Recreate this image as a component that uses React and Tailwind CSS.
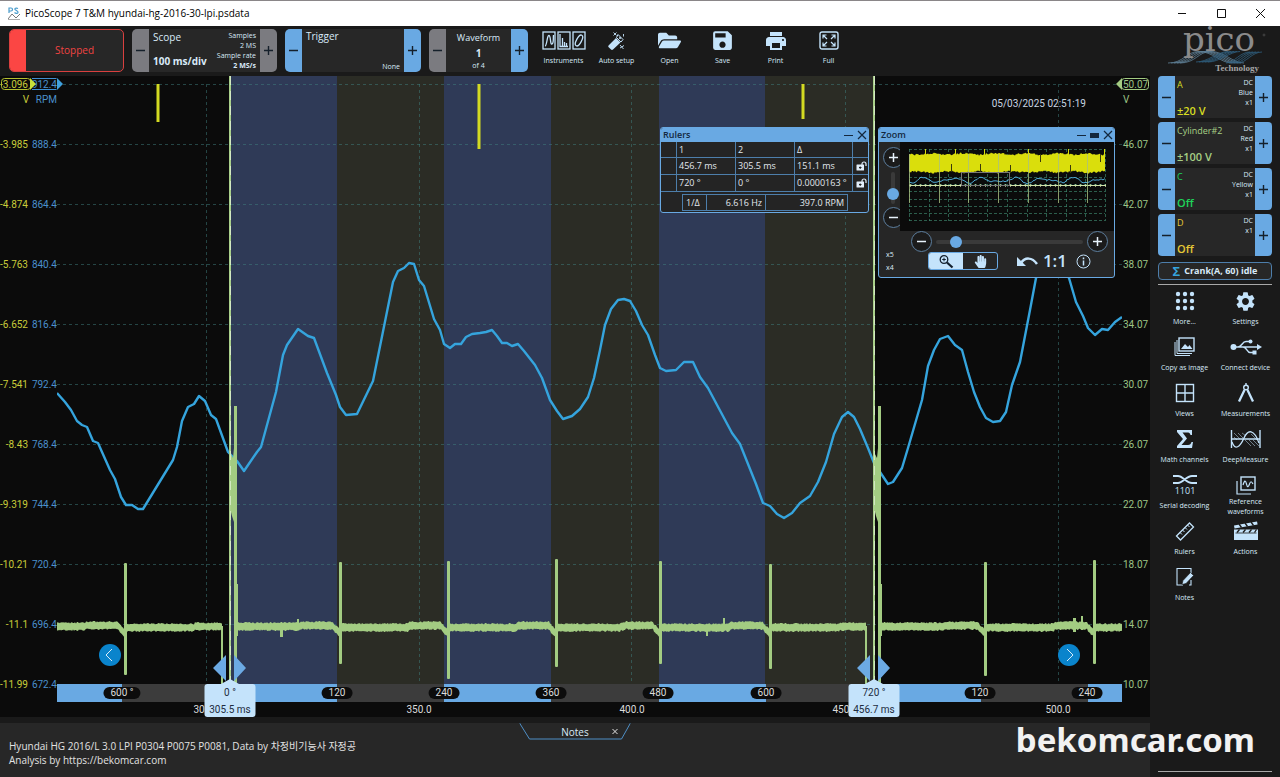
import React from "react";
import { FaFolderOpen, FaHandPaper } from "react-icons/fa";
import { MdSave, MdPrint, MdSettings } from "react-icons/md";

const UI = "font-['Open_Sans','Noto_Sans_CJK_KR',sans-serif]";
const ICE = "#c4e3fb";

/* Fixed-seed noise so that the traces look the same on every render. */
const noise = (n) => {
  const v = Math.sin(n * 12.9898 + 4.1) * 43758.5453;
  return v - Math.floor(v);
};

const X0 = 57;
const SPAN = 1065;
const pct = (x) => `${((x - X0) / SPAN) * 100}%`;

const RPM_CURVE =
  "57,393 65,402 71,410 77,421 82,425 87,427 93,441 98,443 110,470 115,479 121,497 126,505 132,505 138,509 143,509 173,460 177,447 182,421 188,407 194,404 199,396 205,401 211,415 216,419 228,452 237,461 244,471 257,452 261,447 276,392 283,355 287,345 298,329 308,336 314,338 327,373 336,395 340,407 346,415 357,414 373,381 393,282 398,271 404,268 409,263 414,264 419,280 424,286 434,319 440,330 444,344 450,348 455,344 461,344 466,337 472,334 480,333 486,332 492,330 497,336 502,343 507,343 512,346 518,344 524,351 535,365 542,378 550,400 557,411 563,419 572,416 580,409 588,397 594,378 600,350 605,325 611,309 618,300 624,299 630,301 636,311 642,325 648,335 655,355 660,368 666,371 676,370 684,362 693,362 700,377 708,388 716,403 724,418 732,433 740,444 748,464 756,484 763,503 770,506 777,514 784,518 792,513 800,503 810,496 818,482 826,462 834,434 842,417 848,412 854,417 860,429 868,448 874,463 880,472 888,484 893,482 902,468 908,448 915,424 922,400 928,366 934,350 940,339 948,336 955,345 962,350 968,372 974,392 980,407 986,418 993,422 1000,421 1006,412 1012,385 1020,362 1030,310 1036,278 1050,262 1060,266 1069,278 1076,302 1083,316 1088,328 1095,335 1102,329 1108,330 1115,322 1122,317";

const SPIKES = [
  [125, 563, 675],
  [340, 562, 664],
  [448, 561, 679],
  [556, 559, 667],
  [660, 561, 664],
  [770, 564, 669],
  [985, 562, 676],
  [1094, 560, 664],
];

function voltageBand(from, to) {
  const top = [];
  const bottom = [];
  for (let x = from; x <= to; x += 1) {
    let c = 626.5;
    SPIKES.forEach(([s]) => {
      const d = s - x;
      if (d >= 0 && d < 7) c += 7 - d;
      if (d < 0 && d > -70) c += 1;
      if (d >= 7 && d < 40) c -= 1;
    });
    top.push(`${x},${(c - 3 - noise(x) * 1.6).toFixed(1)}`);
    bottom.unshift(`${x},${(c + 3 + noise(x + 500) * 1.6).toFixed(1)}`);
  }
  return top.concat(bottom).join(" ");
}

const BANDS = [
  [230, 337, "#2f3a57"],
  [337, 444, "#2b2c25"],
  [444, 551, "#2f3a57"],
  [551, 659, "#2b2c25"],
  [659, 765, "#2f3a57"],
  [765, 874, "#2b2c25"],
];

function Plot() {
  return (
    <svg viewBox="57 76 1065 608" preserveAspectRatio="none" className="absolute inset-0 h-full w-full" role="img" aria-label="Crank speed and cylinder voltage">
      {BANDS.map(([a, b, c]) => (
        <rect key={a} x={a} y="76" width={b - a} height="608" fill={c} />
      ))}
      <g stroke="#3f7f80" strokeOpacity="0.5" strokeDasharray="3 3">
        {[0, 1, 2, 3, 4, 5, 6, 7, 8, 9].map((i) => (
          <line key={i} x1="57" x2="1122" y1={84.5 + i * 60} y2={84.5 + i * 60} />
        ))}
        {[206.5, 419.5, 631.5, 845.5, 1058.5].map((x) => (
          <line key={x} x1={x} x2={x} y1="84" y2="684" />
        ))}
      </g>
      <g fill="#d3da22">
        <rect x="156.5" y="84" width="3" height="38" />
        <rect x="477.5" y="84" width="3" height="65" />
        <rect x="801.5" y="84" width="3" height="35" />
      </g>
      <polyline points={RPM_CURVE} fill="none" stroke="#35a4dd" strokeWidth="2.4" strokeLinejoin="round" />
      <g fill="#a3cc82">
        <polygon points={voltageBand(57, 222)} />
        <polygon points={voltageBand(236, 866)} />
        <polygon points={voltageBand(881, 1122)} />
        {SPIKES.map(([x, a, b]) => (
          <rect key={x} x={x - 1} y={a} width="3" height={b - a} rx="1" />
        ))}
        <rect x="280" y="626" width="3" height="11" />
        <rect x="297" y="619" width="2" height="7" />
        <rect x="706" y="626" width="2" height="10" />
        <rect x="723" y="618" width="2" height="8" />
        <rect x="1073" y="618" width="3" height="14" />
        <rect x="1081" y="616" width="2" height="14" />
        {[0, 644].map((o) => (
          <g key={o}>
            <rect x={221 + o} y="626" width="2" height="58" />
            <rect x={234 + o} y="406" width="3" height="278" />
            <rect x={236 + o} y="584" width="2" height="52" />
            <path d={`M${230 + o} 452l3 6l2 -20l1 80l-2 4l-2 -6l-2 -8z`} />
          </g>
        ))}
      </g>
      {[230, 874].map((x) => (
        <g key={x}>
          <line x1={x} x2={x} y1="76" y2="684" stroke="#a9d08a" strokeWidth="2" />
          <line x1={x + 0.5} x2={x + 0.5} y1="76" y2="684" stroke="#eef8e8" strokeOpacity="0.6" strokeDasharray="9 6" />
          <path d={`M${x - 4} 655v26l-13 -13zM${x + 4} 655v26l12 -13z`} fill="#6caae4" />
          <path d={`M${x - 9} 684l9 -5l9 5z`} fill={ICE} />
        </g>
      ))}
    </svg>
  );
}

const LEFT_V = ["-3.096", "-3.985", "-4.874", "-5.763", "-6.652", "-7.541", "-8.43", "-9.319", "-10.21", "-11.1", "-11.99"];
const LEFT_RPM = ["912.4", "888.4", "864.4", "840.4", "816.4", "792.4", "768.4", "744.4", "720.4", "696.4", "672.4"];
const RIGHT_V = ["50.07", "46.07", "42.07", "38.07", "34.07", "30.07", "26.07", "22.07", "18.07", "14.07", "10.07"];

function LeftAxis() {
  return (
    <div className="z-10 flex w-[57px] shrink-0 flex-col justify-between pt-px pb-6 text-[10px] leading-4">
      {LEFT_V.map((v, i) => (
        <div key={v} className="relative flex h-4 items-center justify-end gap-[3px]">
          <span className="w-7 shrink-0 text-right text-[#c9cc3a]">
            <span className="float-right">{v}</span>
          </span>
          <span className="w-[26px] shrink-0 text-right text-[#4a90cc]">{LEFT_RPM[i]}</span>
          {i === 0 && (
            <>
              <svg className="absolute -top-px left-0" width="64" height="16" fill="none" aria-hidden="true">
                <rect x="1.5" y="2.5" width="29" height="11" rx="3" stroke="#b5c030" />
                <path d="M30 2l6 6l-6 6z" fill="#c9e03a" />
                <path d="M32 2.5h24.5M32 13.5h24.5" stroke="#3f8fd0" />
                <path d="M57 2l6 6l-6 6z" fill="#3fa0dd" />
              </svg>
              <span className="absolute top-[15px] right-7 text-[#c9cc3a]">V</span>
              <span className="absolute top-[15px] right-0 text-[#4a90cc]">RPM</span>
            </>
          )}
        </div>
      ))}
    </div>
  );
}

function RightAxis() {
  return (
    <div className="z-10 flex w-7 shrink-0 flex-col justify-between pt-px pb-6 text-[10px] leading-4 text-[#9cc486]">
      {RIGHT_V.map((v, i) => (
        <div key={v} className="relative h-4 pl-px">
          {v}
          {i === 0 && (
            <>
              <svg className="absolute -top-px -left-2" width="36" height="16" fill="none" aria-hidden="true">
                <rect x="7.5" y="2.5" width="27" height="11" rx="3" stroke="#a3cc82" />
                <path d="M8 2l-6 6l6 6z" fill="#a3cc82" />
              </svg>
              <span className="absolute top-[15px] left-px">V</span>
            </>
          )}
        </div>
      ))}
    </div>
  );
}

const SEGMENTS = [65, 108, 107, 107, 107, 108, 107, 108, 107, 107, 34];
const PILLS = [[122, "600 °"], [337, "120"], [444, "240"], [551, "360"], [658, "480"], [766, "600"], [980, "120"], [1087, "240"]];
const TIMES = [[206, "300.0"], [419, "350.0"], [632, "400.0"], [845, "450.0"], [1058, "500.0"]];
const FLAGS = [[230, "0 °", "305.5 ms"], [874, "720 °", "456.7 ms"]];

function DegreeBar() {
  return (
    <div className="relative shrink-0 text-[10px] text-[#dcdcdc]">
      <div className="flex h-[18px]">
        {SEGMENTS.map((w, i) => (
          <div key={i} className={i % 2 ? "bg-[#3c3c3c]" : "bg-[#69a9e3]"} style={{ flexGrow: w, flexBasis: 0 }} />
        ))}
      </div>
      <div className="h-[15px]" />
      {PILLS.map(([x, t]) => (
        <span key={x} style={{ left: pct(x) }} className="absolute top-[3px] -translate-x-1/2 rounded-full bg-[#0c0c0c] px-[7px] leading-3 whitespace-nowrap">
          {t}
        </span>
      ))}
      {TIMES.map(([x, t]) => (
        <span key={x} style={{ left: pct(x) }} className="absolute top-5 -translate-x-1/2 leading-3">
          {t}
        </span>
      ))}
      {FLAGS.map(([x, a, b]) => (
        <div key={x} style={{ left: pct(x) }} className="absolute top-0 flex h-[33px] w-[51px] -translate-x-1/2 flex-col items-center justify-between rounded-[3px] bg-[#c4e3fb] pt-[3px] pb-px leading-3 whitespace-nowrap text-[#1d2c40]">
          <span>{a}</span>
          <span>{b}</span>
        </div>
      ))}
    </div>
  );
}

function NavButton({ label, side, d }) {
  return (
    <button aria-label={label} className={`absolute bottom-[18px] flex size-[22px] items-center justify-center rounded-full bg-[#0a84cc] ${side}`}>
      <svg width="22" height="22" fill="none" stroke="#d8ecfa" strokeWidth="1">
        <path d={d} />
      </svg>
    </button>
  );
}

function WindowBar({ title, box }) {
  return (
    <div className="flex h-[14px] items-center justify-between bg-[#69a9e3] pr-px pl-[2px] text-[9px] leading-3 font-semibold text-[#13283e]">
      <h2>{title}</h2>
      <div className="flex items-center gap-1">
        <button aria-label={`Minimise ${title}`}>
          <svg width="9" height="10" stroke="#13283e"><path d="M0 5.5h9" /></svg>
        </button>
        {box && (
          <button aria-label={`Dock ${title}`}>
            <svg width="9" height="10" fill="#13283e"><rect x="0" y="3" width="9" height="5" /></svg>
          </button>
        )}
        <button aria-label={`Close ${title}`}>
          <svg width="10" height="10" stroke="#13283e" strokeWidth="1.2"><path d="M1 1l8 8M9 1l-8 8" /></svg>
        </button>
      </div>
    </div>
  );
}

const LockIcon = () => (
  <svg width="11" height="10" viewBox="0 0 11 10" fill="none">
    <rect x="0.5" y="3.5" width="7.5" height="6" rx="0.5" fill="#e2eefa" />
    <path d="M6 4V3a2 2 0 0 1 4 0v2" stroke="#e2eefa" strokeWidth="1.2" />
    <path d="M3 6.500h2.500M4.200 5.500v2.500" stroke="#222" />
  </svg>
);

function Rulers() {
  const cell = "border-r border-b border-[#4d7eab] px-[2px] font-normal text-left whitespace-nowrap";
  return (
    <section className={`absolute top-[51px] right-[281px] w-[209px] overflow-hidden rounded-[3px] border border-[#69a9e3] bg-[#242424] text-[9px] leading-3 text-[#e2e8ee] ${UI}`}>
      <WindowBar title="Rulers" />
      <table className="w-full table-fixed border-separate border-spacing-0">
        <colgroup>
          <col className="w-4" />
          <col className="w-[59px]" />
          <col className="w-[59px]" />
          <col />
          <col className="w-[15px]" />
        </colgroup>
        <thead>
          <tr className="h-4">
            <th className={cell} />
            <th className={cell}>1</th>
            <th className={cell}>2</th>
            <th className={cell}>Δ</th>
            <th className="border-b border-[#4d7eab]" />
          </tr>
        </thead>
        <tbody>
          {[["456.7 ms", "305.5 ms", "151.1 ms"], ["720 °", "0 °", "0.0000163 °"]].map((r) => (
            <tr key={r[0]} className="h-[17px]">
              <td className={cell} />
              {r.map((v) => (
                <td key={v} className={cell}>{v}</td>
              ))}
              <td className="border-b border-[#4d7eab] p-0 pl-[3px]">
                <button aria-label="Lock ruler" className="block"><LockIcon /></button>
              </td>
            </tr>
          ))}
        </tbody>
      </table>
      <dl className="mt-[2px] mr-5 mb-px ml-[21px] flex h-[17px] items-center border border-[#4d7eab]">
        <dt className="w-6 self-stretch border-r border-[#4d7eab] pl-[3px] leading-4">1/Δ</dt>
        <dd className="w-[59px] self-stretch border-r border-[#4d7eab] pr-[3px] text-right leading-4">6.616 Hz</dd>
        <dd className="flex-1 pr-[3px] text-right leading-4">397.0 RPM</dd>
      </dl>
    </section>
  );
}

function miniBand() {
  const top = [];
  const bottom = [];
  for (let x = 0; x <= 196; x += 1) {
    top.push(`${x},${(6 - noise(x) * 2 + Math.sin(x / 5) * 0.7).toFixed(1)}`);
    bottom.unshift(`${x},${(22 + noise(x + 70) * 2 - Math.sin(x / 5) * 0.7).toFixed(1)}`);
  }
  return top.concat(bottom).join(" ");
}

const MINI_RPM = Array.from({ length: 99 }, (_, i) => `${i * 2},${(30.5 + noise(i) * 1.5 + Math.sin(i / 1.5) * 1.2 - Math.cos(((i * 2) / 29.8) * 6.283) * -2).toFixed(1)}`).join(" ");

function MiniMap() {
  return (
    <svg viewBox="-9 -7 214 89" preserveAspectRatio="none" className="h-[89px] min-w-0 flex-1 bg-[#0b0b0b]" role="img" aria-label="Capture overview">
      <g stroke="#3f8a70" strokeOpacity="0.65" strokeDasharray="3 2" fill="none">
        {[0, 7, 14, 21, 28, 35, 42, 50, 57, 64, 71].map((y) => (
          <path key={y} d={`M0 ${y + 0.5}h196`} />
        ))}
        {[0, 20, 39, 59, 78, 98, 118, 137, 157, 176, 196].map((x) => (
          <path key={x} d={`M${x + 0.5} 0v72`} />
        ))}
      </g>
      <polygon points={miniBand()} fill="#dade0c" />
      <g fill="#dade0c">
        {[16, 46, 75, 119, 159, 195].map((x) => (
          <rect key={x} x={x} y="0" width="1" height="6" />
        ))}
      </g>
      <g fill="#39390a">
        {[[42, 15], [71, 15], [101, 16], [131, 5], [161, 16], [191, 5]].map(([x, y]) => (
          <rect key={x} x={x} y={y} width="1" height="8" />
        ))}
      </g>
      <polyline points={MINI_RPM} fill="none" stroke="#4fa8d4" />
      <path d="M0 36.5h197" stroke="#cfe0a8" strokeWidth="1" />
      <path d="M1 36.5h196" stroke="#cfe0a8" strokeWidth="3" strokeDasharray="1 4" strokeOpacity="0.7" />
      <g fill="#a9bf7f">
        {[0, 30, 59, 89, 119, 149, 178].map((x) => (
          <rect key={x} x={x} y="5" width="1" height="49" fillOpacity={0.8} />
        ))}
      </g>
      <rect x="52.5" y="23.5" width="48" height="13" fill="none" stroke="#777" />
    </svg>
  );
}

function RoundButton({ label, plus }) {
  return (
    <button aria-label={label} className="flex size-[21px] shrink-0 items-center justify-center rounded-full border border-[#5d7f9f] bg-[#1b1b1b]">
      <svg width="9" height="9" stroke="#e8f3fc" strokeWidth="1.5">
        <path d={plus ? "M0 4.5h9M4.5 0v9" : "M0 4.5h9"} />
      </svg>
    </button>
  );
}

const RANGE =
  "appearance-none bg-transparent [&::-webkit-slider-runnable-track]:rounded-full [&::-webkit-slider-runnable-track]:bg-[#3a3a3a] [&::-webkit-slider-thumb]:size-3 [&::-webkit-slider-thumb]:appearance-none [&::-webkit-slider-thumb]:rounded-full [&::-webkit-slider-thumb]:bg-[#69a9e3]";

function ZoomPanel() {
  return (
    <section className={`absolute top-[51px] right-[35px] w-[237px] overflow-hidden rounded-[3px] border border-[#69a9e3] bg-[#262626] text-[#dcebf8] ${UI}`}>
      <WindowBar title="Zoom" box />
      <div className="flex">
        <div className="flex w-[21px] shrink-0 flex-col items-start justify-between pt-[5px] pb-[3px] pl-1">
          <RoundButton label="Zoom in vertically" plus />
          <input
            type="range"
            aria-label="Vertical zoom"
            defaultValue="20"
            className={`ml-1 h-8 w-3 [direction:rtl] [writing-mode:vertical-lr] [&::-webkit-slider-runnable-track]:w-1 [&::-webkit-slider-thumb]:-ml-1 ${RANGE}`}
          />
          <RoundButton label="Zoom out vertically" />
        </div>
        <MiniMap />
      </div>
      <div className="flex items-center gap-1 pr-[6px] pl-8">
        <RoundButton label="Zoom out horizontally" />
        <input
          type="range"
          aria-label="Horizontal zoom"
          defaultValue="10"
          className={`h-3 min-w-0 flex-1 [&::-webkit-slider-runnable-track]:h-1 [&::-webkit-slider-thumb]:-mt-1 ${RANGE}`}
        />
        <RoundButton label="Zoom in horizontally" plus />
      </div>
      <div className="mb-[7px] flex h-[18px] items-center pr-[23px] pl-[7px]">
        <div className="w-[42px] text-[7px] leading-[13px]">
          <p>x5</p>
          <p>x4</p>
        </div>
        <div className="flex h-[18px] w-[70px] overflow-hidden rounded-[3px] border border-[#69a9e3]">
          <button aria-label="Zoom tool" className="flex flex-1 items-center justify-center bg-[#c4e3fb]">
            <svg width="16" height="15" fill="none" stroke="#13202e">
              <circle cx="6" cy="5.5" r="3.8" strokeWidth="1.3" />
              <path d="M4.2 5.5h3.6M6 3.7v3.6" />
              <path d="M9 8.5l5.5 5" strokeWidth="2.2" />
            </svg>
          </button>
          <button aria-label="Pan tool" className="flex flex-1 items-center justify-center">
            <FaHandPaper size={13} color={ICE} />
          </button>
        </div>
        <div className="ml-auto flex items-center gap-[5px]">
          <button aria-label="Undo zoom">
            <svg width="21" height="12" fill="none">
              <path d="M4 8C8 2 15 2 20 9" stroke={ICE} strokeWidth="2.5" />
              <path d="M0 2v9h9z" fill={ICE} />
            </svg>
          </button>
          <button aria-label="Reset zoom to one to one" className="text-[17px] leading-4 font-semibold text-[#c4e3fb]">1:1</button>
          <button aria-label="Zoom information" className="ml-1">
            <svg width="15" height="15" fill="none" stroke={ICE}>
              <circle cx="7.5" cy="7.5" r="6.5" />
              <path d="M7.5 6.5v5M7.5 3.5v1.8" strokeWidth="1.5" />
            </svg>
          </button>
        </div>
      </div>
    </section>
  );
}

function StepButton({ label, plus, tone }) {
  return (
    <button aria-label={label} className={`flex w-[17px] shrink-0 items-center justify-center ${tone}`}>
      <svg width="9" height="9" stroke="#15202b" strokeWidth="1.4">
        <path d={plus ? "M0 4.5h9M4.5 0v9" : "M0 4.5h9"} />
      </svg>
    </button>
  );
}

const BLUE = "bg-[#69a9e3]";
const GREY = "bg-[#7b7b80]";

function Stepper({ name, minus, plus, width, children }) {
  return (
    <div className={`flex h-[43px] shrink-0 overflow-hidden rounded-[5px] bg-[#272727] ${width}`}>
      <StepButton label={`Decrease ${name}`} tone={minus} />
      <div className="min-w-0 flex-1">{children}</div>
      <StepButton label={`Increase ${name}`} plus tone={plus} />
    </div>
  );
}

const InstrumentsIcon = () => (
  <svg width="44" height="20" fill="none" stroke={ICE} strokeWidth="1.3">
    <rect x="1" y="1" width="12" height="17" />
    <rect x="16" y="1" width="12" height="17" />
    <rect x="31" y="1" width="12" height="17" />
    <path d="M3 15C5 15 5 4 7 4.500S8 14 10 13S11 7 11.500 4M18 3v12.500h8M20.500 15V7M22.500 15v-4M24.500 15v-3" />
    <ellipse cx="37" cy="9.500" rx="2.500" ry="6" transform="rotate(28 37 9.500)" />
  </svg>
);

const WandIcon = () => (
  <svg width="18" height="20" fill="none">
    <path d="M1 14L8 7l4.500 4.500L5 18.500a1.500 1.500 0 0 1-2 0L1 16.500a1.600 1.600 0 0 1 0-2.500z" fill={ICE} />
    <path d="M8.500 6.500L10 3.500l5 5L13 11z" stroke={ICE} />
    <circle cx="12" cy="7" r="1" fill={ICE} />
    <path d="M5.500 1.500l3 3M8.500 1.500l-3 3M12 14l3.500 4M16 14.500l-4 2.500M15.500 3v2.500" stroke={ICE} strokeWidth="0.900" />
  </svg>
);

const FullIcon = () => (
  <svg width="20" height="20" fill="none" stroke={ICE} strokeWidth="1.4">
    <rect x="1" y="1" width="18" height="17" rx="2" />
    <path d="M4 7.500V4h3.500M4 4l4 4M12.500 4H16v3.500M16 4l-4 4M4 11.500V15h3.500M4 15l4-4M12.500 15H16v-3.500M16 15l-4-4" strokeWidth="1.2" />
  </svg>
);

const TOOLS = [
  ["Instruments", <InstrumentsIcon />],
  ["Auto setup", <WandIcon />],
  ["Open", <FaFolderOpen size={23} />],
  ["Save", <MdSave size={25} />],
  ["Print", <MdPrint size={24} />],
  ["Full", <FullIcon />],
];

function Toolbar() {
  return (
    <div className="flex h-[50px] shrink-0 items-start gap-2 overflow-hidden bg-[#1a1a1a] pt-[3px] pl-[9px] text-[#d9eaf8]">
      <button className="flex h-[43px] w-[115px] shrink-0 overflow-hidden rounded-[5px] border border-[#d9403f] bg-[#272727]">
        <span className="w-4 self-stretch bg-[#fb4644]" />
        <span className="flex-1 self-center text-[10px] text-[#f04442]">Stopped</span>
      </button>
      <Stepper name="timebase" minus={GREY} plus={GREY} width="w-[145px]">
        <div className="flex h-full justify-between pt-[2px] pr-1 pl-1">
          <div className="flex flex-col justify-between pb-[5px] text-[10px] leading-3 whitespace-nowrap">
            <p>Scope</p>
            <p className="font-bold">100 ms/div</p>
          </div>
          <div className="text-right text-[7px] leading-[10px] whitespace-nowrap">
            <p>Samples</p>
            <p>2 MS</p>
            <p>Sample rate</p>
            <p className="font-bold">2 MS/s</p>
          </div>
        </div>
      </Stepper>
      <Stepper name="trigger" minus={BLUE} plus={BLUE} width="w-[136px]">
        <div className="flex h-full flex-col justify-between px-1 pt-px">
          <p className="text-[10px] leading-3">Trigger</p>
          <p className="text-right text-[7px] leading-[10px]">None</p>
        </div>
      </Stepper>
      <Stepper name="waveform" minus={GREY} plus={BLUE} width="w-[99px]">
        <div className="flex h-full flex-col items-center justify-between pt-[3px] pb-px">
          <p className="text-[9px] leading-3">Waveform</p>
          <p className="text-[10px] leading-3 font-bold">1</p>
          <p className="text-[7px] leading-[10px]">of 4</p>
        </div>
      </Stepper>
      <nav className="ml-px flex" aria-label="File">
        {TOOLS.map(([t, icon]) => (
          <button key={t} className="flex w-[53px] flex-col items-center gap-[3px] text-[7px] leading-3 text-[#d9eaf8]">
            <span className="flex h-[23px] items-center justify-center text-[#c4e3fb]">{icon}</span>
            {t}
          </button>
        ))}
      </nav>
    </div>
  );
}

function PicoLogo() {
  return (
    <svg width="106" height="50" viewBox="0 0 106 50" fill="none" className="overflow-visible" role="img" aria-label="pico Technology">
      <g stroke="#5f8298" strokeWidth="0.8">
        {[0, 3, 6, 9, 12].map((o) => (
          <path key={o} d={`M${2 + o} 37C${18 + o} 37 ${20 + o} 25.500 ${33 + o} 25.500S${55 + o} 37 ${66 + o} 37`} />
        ))}
      </g>
      <g stroke="#2f5f80" strokeWidth="0.8">
        {[0, 3, 6, 9, 12].map((o) => (
          <path key={o} d={`M${30 + o} 36C${42 + o} 36 ${52 + o} 25.500 ${62 + o} 25.500M${60 + o} 37C${68 + o} 37 ${74 + o} 26 ${84 + o} 26`} />
        ))}
      </g>
      <text x="53" y="25" textAnchor="middle" fill="#8b8b8b" fontSize="34" fontFamily="'DejaVu Serif', serif">pico</text>
      <text x="93" y="45" textAnchor="end" fill="#a5a5a5" fontSize="9" fontWeight="bold" fontFamily="'Liberation Serif', serif">Technology</text>
      <circle cx="98" cy="9" r="1" stroke="#666" strokeWidth="0.5" />
    </svg>
  );
}

const CHANNELS = [
  ["A", "±20 V", ["DC", "Blue", "x1"], "text-[#d6dc22]"],
  ["Cylinder#2", "±100 V", ["DC", "Red", "x1"], "text-[#a6cf85]"],
  ["C", "Off", ["DC", "Yellow", "x1"], "text-[#1fd35a]"],
  ["D", "Off", ["DC", "x1"], "text-[#e6c935]"],
];

const line = { fill: "none", stroke: ICE, strokeWidth: 1.4 };

const MENU = [
  ["More...", <svg width="20" height="20" fill={ICE}>{[3, 10, 17].map((x) => [3, 10, 17].map((y) => <circle key={`${x}${y}`} cx={x} cy={y} r="2.2" />))}</svg>],
  ["Settings", <MdSettings size={23} />],
  ["Copy as image", <svg width="22" height="20" {...line}><rect x="5" y="1" width="15" height="13" /><path d="M1 5v13.500h15M3 3v13.500h15" strokeWidth="1" /><path d="M7 12l4-5l3 3l1.500-2l3 4z" fill={ICE} stroke="none" /></svg>],
  ["Connect device", <svg width="32" height="18" {...line}><circle cx="3.500" cy="9" r="3" fill={ICE} stroke="none" /><path d="M3 9h25M8 9c4 0 4-5.500 8-5.500h4M13 9c4 0 4 5.500 7 5.500h4" /><circle cx="20.500" cy="3.500" r="2" fill={ICE} stroke="none" /><rect x="22.500" y="12.500" width="4" height="4" fill={ICE} stroke="none" /><path d="M27 6l5 3l-5 3z" fill={ICE} stroke="none" /></svg>],
  ["Views", <svg width="20" height="20" {...line}><rect x="1.500" y="1.500" width="17" height="17" /><path d="M10 1.500v17M1.500 10h17" /></svg>],
  ["Measurements", <svg width="18" height="20" {...line}><circle cx="9" cy="4.500" r="2.300" /><path d="M9 0v2" /><path d="M7.500 7L2 18.500M10.500 7L16 18.500" strokeWidth="2.300" /></svg>],
  ["Math channels", <svg width="18" height="20"><path d="M1 1h15v5h-1.500C14 4 13 3.500 11 3.500H6.500L11 9.500L5.500 16H12c2 0 3-1 3.500-3H17l-1 6H1v-2L7 10L1 3z" fill={ICE} /></svg>],
  ["DeepMeasure", <svg width="32" height="20" {...line}><path d="M1.500 1v18M30 1v18M1.500 10H30" /><path d="M2 13C5 22 10 18 14 9S24 0 29 14" strokeWidth="1.300" /><path d="M4 4l6 6M8 4l5 5M12 4l4 3M15 11l6 6M19 11l6 6M23 11l6 6M4 8l3 3M21 5l6 6" strokeWidth="0.500" /></svg>],
  ["Serial decoding", <svg width="24" height="22" {...line} strokeWidth="1.800"><path d="M0 2h5C10 2 13 9 19 9h5M0 9h5C10 9 13 2 19 2h5" /><text x="12" y="20" textAnchor="middle" fill={ICE} stroke="none" fontSize="9" fontFamily="Open Sans, sans-serif">1101</text></svg>],
  ["Reference waveforms", <svg width="22" height="19" {...line}><rect x="6" y="1" width="14" height="13" /><path d="M2 5v13h14M8 9c1.500-5 2.500-5 3.500-1s2 3 3 0s2-3 3.500 0" strokeWidth="1.200" /></svg>],
  ["Rulers", <svg width="20" height="20" {...line}><path d="M1.500 15L14.500 2l4 4L5.500 19z" strokeWidth="1.300" /><path d="M5 11.500l2 2M7.500 9l2 2M10 6.500l2 2M12.500 4l2 2" strokeWidth="1" /></svg>],
  ["Actions", <svg width="26" height="20" fill={ICE}><path d="M1 8.500h24V19H1z" /><path d="M1 4.500L24 0.500l.6 3L1.500 7.500z" /><g stroke="#1a1a1a" strokeWidth="1.300"><path d="M6 3l2.500 3.500M12 2l2.500 3.500M18 1l2.500 3.500M4 11.500L6.500 8.500M10 11.500l2.500-3M16 11.500l2.500-3M21.500 11.500l2-3" /><path d="M2.500 12h21" strokeWidth="0.800" /></g></svg>],
  ["Notes", <svg width="20" height="20" {...line}><path d="M16 6V1.500H2v16.500h6M16 13v5h-2" strokeWidth="1.100" /><path d="M7 17.500l1-4L15.500 5.500l3 3L11 16.500z" fill={ICE} stroke="#1a1a1a" strokeWidth="0.600" /></svg>],
];

function Sidebar() {
  return (
    <aside className="flex w-[130px] shrink-0 flex-col bg-[#1a1a1a] text-[#d9eaf8]">
      <div className="flex h-[50px] justify-center pl-2"><PicoLogo /></div>
      <div className="flex flex-col gap-1 px-2">
        {CHANNELS.map(([name, range, info, tone]) => (
          <div key={name} className="flex h-[42px] overflow-hidden rounded-[4px] bg-[#272727]">
            <StepButton label={`Decrease range ${name}`} tone={BLUE} />
            <div className="relative flex min-w-0 flex-1 justify-between pr-px pl-[2px]">
              <div className={`flex flex-col justify-between pt-[3px] pb-px leading-3 whitespace-nowrap ${tone}`}>
                <p className="text-[9px]">{name}</p>
                <p className="text-[11px] font-semibold">{range}</p>
              </div>
              <div className="absolute top-[2px] right-[2px] text-right text-[7px] leading-[10px]">
                {info.map((t) => <p key={t}>{t}</p>)}
              </div>
            </div>
            <StepButton label={`Increase range ${name}`} plus tone={BLUE} />
          </div>
        ))}
        <button className="mt-[2px] flex h-[18px] items-center justify-center gap-1 rounded-[4px] border border-[#4d7eab] bg-[#272727] text-[9px] font-bold">
          <span className="text-[13px] leading-3 font-bold text-[#35a4dd]">Σ</span>
          Crank(A, 60) idle
        </button>
      </div>
      <div className="mx-2 mt-1 border-t border-[#a8a8a8]" />
      <nav className="mt-1 grid grid-cols-2 px-1" aria-label="Tools">
        {MENU.map(([t, icon]) => (
          <button key={t} className={`flex h-[46px] flex-col items-center px-1 text-[7px] leading-[10px] ${t.startsWith("Ref") ? "" : "gap-1 whitespace-nowrap"}`}>
            <span className="flex h-6 shrink-0 items-center justify-center text-[#c4e3fb]">{icon}</span>
            <span>{t}</span>
          </button>
        ))}
      </nav>
      <div className="mx-2 mt-auto mb-[5px] border-t border-[#a8a8a8]" />
    </aside>
  );
}

function TitleBar() {
  return (
    <header className="flex h-[26px] shrink-0 items-center justify-between border-t border-[#8a8688] bg-white pr-[14px] pl-2 text-black">
      <div className="flex items-center gap-[5px]">
        <svg width="12" height="13" fill="none" aria-hidden="true">
          <path d="M1 6V1h2a1.500 1.500 0 0 1 0 3H1M10 1.500C8 .5 6.500 1.500 7 2.500S10.500 4 10 5.500S7.500 6.500 6.500 5.500" stroke="#4a9ccc" strokeWidth="1.200" />
          <path d="M0 12l4-5l4 4l4-4" stroke="#777" />
          <path d="M0 12.500h12" stroke="#999" strokeWidth="0.800" />
        </svg>
        <h1 className="text-[10px]">PicoScope 7 T&amp;M hyundai-hg-2016-30-lpi.psdata</h1>
      </div>
      <div className="flex items-center gap-7">
        {[["Minimise", "M1 5.500h8"], ["Maximise", "M1.500 1.500h8v8h-8z"], ["Close", "M1 1l9 9M10 1l-9 9"]].map(([l, d]) => (
          <button key={l} aria-label={l}>
            <svg width="11" height="11" fill="none" stroke="#111"><path d={d} /></svg>
          </button>
        ))}
      </div>
    </header>
  );
}

export default function App() {
  return (
    <div className={`relative flex min-h-screen flex-col bg-[#1a1a1a] ${UI}`}>
      <TitleBar />
      <div className="flex flex-1">
        <div className="flex min-w-0 flex-1 flex-col">
          <Toolbar />
          <main className="relative flex flex-1 overflow-hidden bg-[#0b0b0b] font-[Roboto,sans-serif]">
            <LeftAxis />
            <div className="flex min-w-0 flex-1 flex-col">
              <div className="relative flex-1">
                <Plot />
                <time className="absolute top-5 right-9 text-[10px] leading-4 text-[#c9d6e2]">05/03/2025 02:51:19</time>
                <NavButton label="Previous cycle" side="left-[42px]" d="M13 5l-6 6l6 6" />
                <NavButton label="Next cycle" side="right-[42px]" d="M9 5l6 6l-6 6" />
              </div>
              <DegreeBar />
            </div>
            <RightAxis />
            <Rulers />
            <ZoomPanel />
          </main>
          <footer className="relative mt-[6px] flex h-[54px] shrink-0 flex-col bg-[#272727] pl-[9px] text-[10px] leading-[14px] text-[#e2e2e2]">
            <div className="absolute top-0 left-1/2 flex h-[17px] w-[111px] -translate-x-1/2 items-center justify-center text-[#d9eaf8]">
              <svg className="absolute inset-0" width="111" height="17" fill="none" stroke="#4f8fc6"><path d="M0 0l10 16h92l9-16" /></svg>
              <h2>Notes</h2>
              <button aria-label="Close notes" className="absolute right-3">
                <svg width="7" height="7" stroke="#e2e2e2"><path d="M1 1l5 5M6 1l-5 5" /></svg>
              </button>
            </div>
            <p className="mt-4">Hyundai HG 2016/L 3.0 LPI P0304 P0075 P0081, Data by 차정비기능사 자정공</p>
            <p>Analysis by https://bekomcar.com</p>
          </footer>
        </div>
        <Sidebar />
      </div>
      <p className="absolute right-[25px] bottom-[17px] font-['Noto_Sans',sans-serif] text-[33px] leading-10 font-bold text-[#f2f2f2]">bekomcar.com</p>
    </div>
  );
}
